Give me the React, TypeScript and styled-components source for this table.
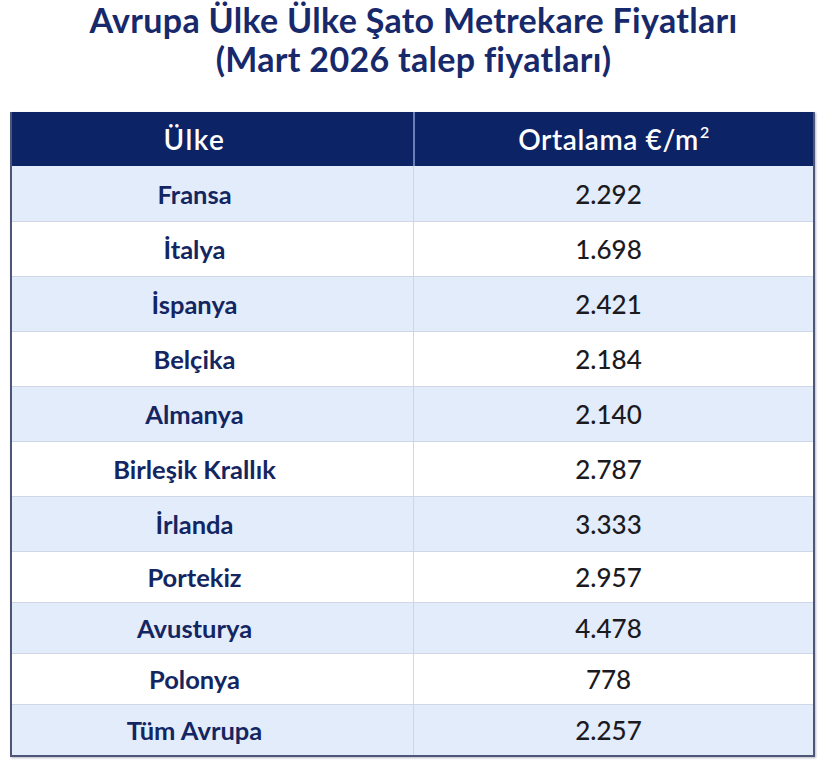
import React from "react";
import styled, { createGlobalStyle } from "styled-components";

const GlobalStyle = createGlobalStyle`
  html, body {
    margin: 0;
    padding: 0;
    background: #ffffff;
  }
  body {
    font-family: Lato, "Noto Sans", sans-serif;
  }
`;

type Row = { country: string; price: string; short?: boolean };

const rows: Row[] = [
  { country: "Fransa", price: "2.292" },
  { country: "İtalya", price: "1.698" },
  { country: "İspanya", price: "2.421" },
  { country: "Belçika", price: "2.184" },
  { country: "Almanya", price: "2.140" },
  { country: "Birleşik Krallık", price: "2.787" },
  { country: "İrlanda", price: "3.333" },
  { country: "Portekiz", price: "2.957", short: true },
  { country: "Avusturya", price: "4.478", short: true },
  { country: "Polonya", price: "778", short: true },
  { country: "Tüm Avrupa", price: "2.257", short: true },
];

const App = () => (
  <>
    <GlobalStyle />
    <Page>
      <Title>
        Avrupa Ülke Ülke Şato Metrekare Fiyatları
        <br />
        (Mart 2026 talep fiyatları)
      </Title>
      <Table>
        <HeaderRow>
          <HeaderCell $left>Ülke</HeaderCell>
          <HeaderCell>
            Ortalama €/m<Sup>2</Sup>
          </HeaderCell>
        </HeaderRow>
        {rows.map((row, i) => (
          <BodyRow key={row.country} $striped={i % 2 === 0} $short={row.short}>
            <CountryCell>{row.country}</CountryCell>
            <PriceCell>{row.price}</PriceCell>
          </BodyRow>
        ))}
      </Table>
    </Page>
  </>
);

const Page = styled.div`
  display: flex;
  flex-direction: column;
  align-items: stretch;
  padding: 0 11px 13px 10px;
`;

const Title = styled.h1`
  margin: 0;
  padding-left: 2px;
  height: 112px;
  text-align: center;
  color: #17296a;
  font-family: Lato, sans-serif;
  font-weight: 700;
  font-size: 34px;
  line-height: 39px;
  letter-spacing: 0.3px;
`;

const Table = styled.div`
  display: flex;
  flex-direction: column;
  border: 2px solid #4d5677;
  border-top: none;
  box-shadow: 1px 1px 2px rgba(40, 50, 90, 0.35);
`;

const HeaderRow = styled.div`
  display: grid;
  grid-template-columns: 401px 1fr;
  height: 54px;
  background: #0c2366;
`;

const HeaderCell = styled.div<{ $left?: boolean }>`
  display: flex;
  align-items: center;
  justify-content: center;
  color: #ffffff;
  font-size: 28px;
  font-weight: 600;
  letter-spacing: ${(p) => (p.$left ? "1.5px" : "0.6px")};
  padding-right: ${(p) => (p.$left ? "36px" : "0")};
  border-left: ${(p) => (p.$left ? "none" : "2px solid #6a7fb5")};
`;

const Sup = styled.span`
  font-size: 16px;
  align-self: flex-start;
  margin-top: 10px;
  margin-left: 1px;
`;

const BodyRow = styled.div<{ $striped: boolean; $short?: boolean }>`
  display: grid;
  grid-template-columns: 401px 1fr;
  height: ${(p) => (p.$short ? "51px" : "55px")};
  background: ${(p) => (p.$striped ? "#e3ecfb" : "#ffffff")};
  border-top: 1px solid #cdd7e8;
  box-sizing: border-box;

  &:nth-child(2) {
    border-top: none;
  }
`;

const CountryCell = styled.div`
  display: flex;
  align-items: center;
  justify-content: center;
  padding-right: 36px;
  color: #142662;
  font-size: 25.5px;
  font-weight: 700;
`;

const PriceCell = styled.div`
  display: flex;
  align-items: center;
  justify-content: center;
  padding-right: 10px;
  color: #1b1b1f;
  font-size: 26px;
  font-weight: 500;
  border-left: 1px solid #cdd7e8;
`;

export default App;
